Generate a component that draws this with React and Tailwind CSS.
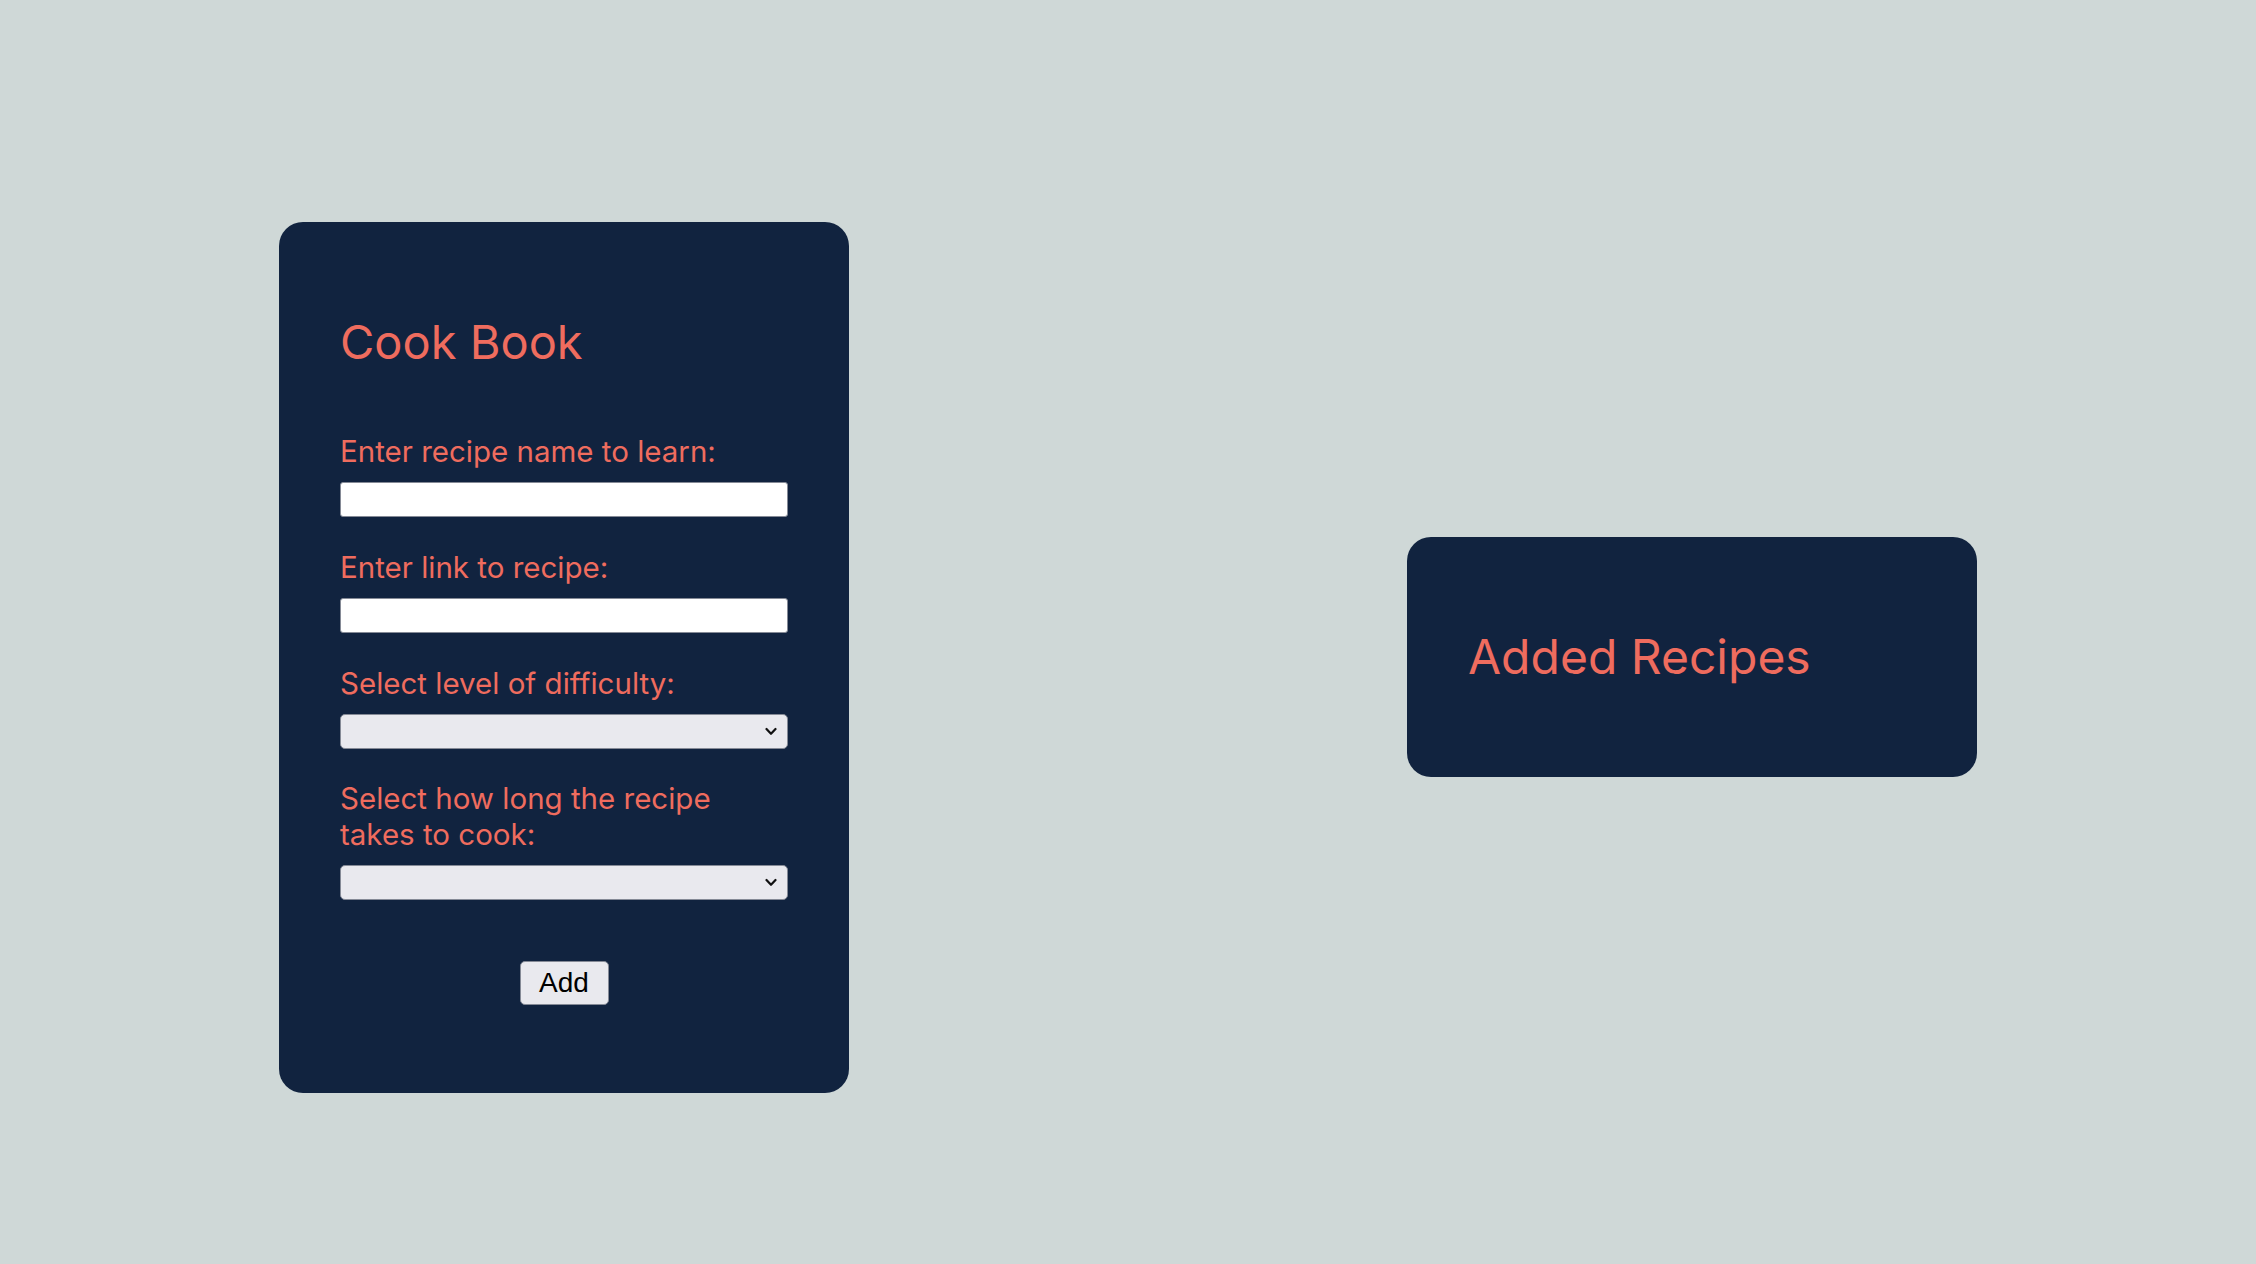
import React from 'react';

const labelClass = 'block text-[29.5px] leading-[36px] text-[#ef6c5e]';
const fieldClass = 'block w-full h-[35px] border border-[#858a96] outline-none';

const Chevron = () => (
  <svg
    className="pointer-events-none absolute right-[11px] top-[13px] h-[9px] w-[12px]"
    viewBox="0 0 12 9"
    fill="none"
    stroke="#111"
    strokeWidth="2.2"
    strokeLinecap="round"
    strokeLinejoin="round"
  >
    <path d="M1.5 2 L6 6.8 L10.5 2" />
  </svg>
);

const SelectField = ({ id }) => (
  <div className="relative mt-[13px]">
    <select
      id={id}
      className={`${fieldClass} appearance-none rounded-[5px] bg-[#e9e9ee]`}
      defaultValue=""
    >
      <option value="" />
    </select>
    <Chevron />
  </div>
);

const CookBook = () => (
  <div className="w-[570px] rounded-[24px] bg-[#11233f] px-[61px] pt-[91px] pb-[88px]">
    <h1 className="text-[47px] leading-[58px] font-normal text-[#ef6c5e]">
      Cook Book
    </h1>
    <form className="mt-[62px]" onSubmit={(e) => e.preventDefault()}>
      <label htmlFor="name" className={labelClass}>
        Enter recipe name to learn:
      </label>
      <input
        id="name"
        type="text"
        className={`${fieldClass} mt-[13px] rounded-[3px] bg-white`}
      />

      <label htmlFor="link" className={`${labelClass} mt-[32px]`}>
        Enter link to recipe:
      </label>
      <input
        id="link"
        type="text"
        className={`${fieldClass} mt-[13px] rounded-[3px] bg-white`}
      />

      <label htmlFor="difficulty" className={`${labelClass} mt-[32px]`}>
        Select level of difficulty:
      </label>
      <SelectField id="difficulty" />

      <label htmlFor="time" className={`${labelClass} mt-[31px] pr-[40px]`}>
        Select how long the recipe takes to cook:
      </label>
      <SelectField id="time" />

      <div className="mt-[61px] flex justify-center">
        <button
          type="submit"
          className="h-[44px] w-[89px] rounded-[5px] border border-[#858a96] bg-[#e9e9ee] text-[28px] leading-none text-black [font-family:'Liberation_Sans',Arial,sans-serif]"
        >
          Add
        </button>
      </div>
    </form>
  </div>
);

const AddedRecipes = () => (
  <div className="w-[570px] rounded-[24px] bg-[#11233f] px-[61px] py-[91px]">
    <h1 className="text-[48px] leading-[58px] font-normal text-[#ef6c5e]">
      Added Recipes
    </h1>
  </div>
);

export default function App() {
  return (
    <div className="flex h-screen items-center justify-around bg-[#cfd8d7] pt-[50px] [font-family:Inter,'Noto_Sans',sans-serif]">
      <CookBook />
      <AddedRecipes />
    </div>
  );
}
